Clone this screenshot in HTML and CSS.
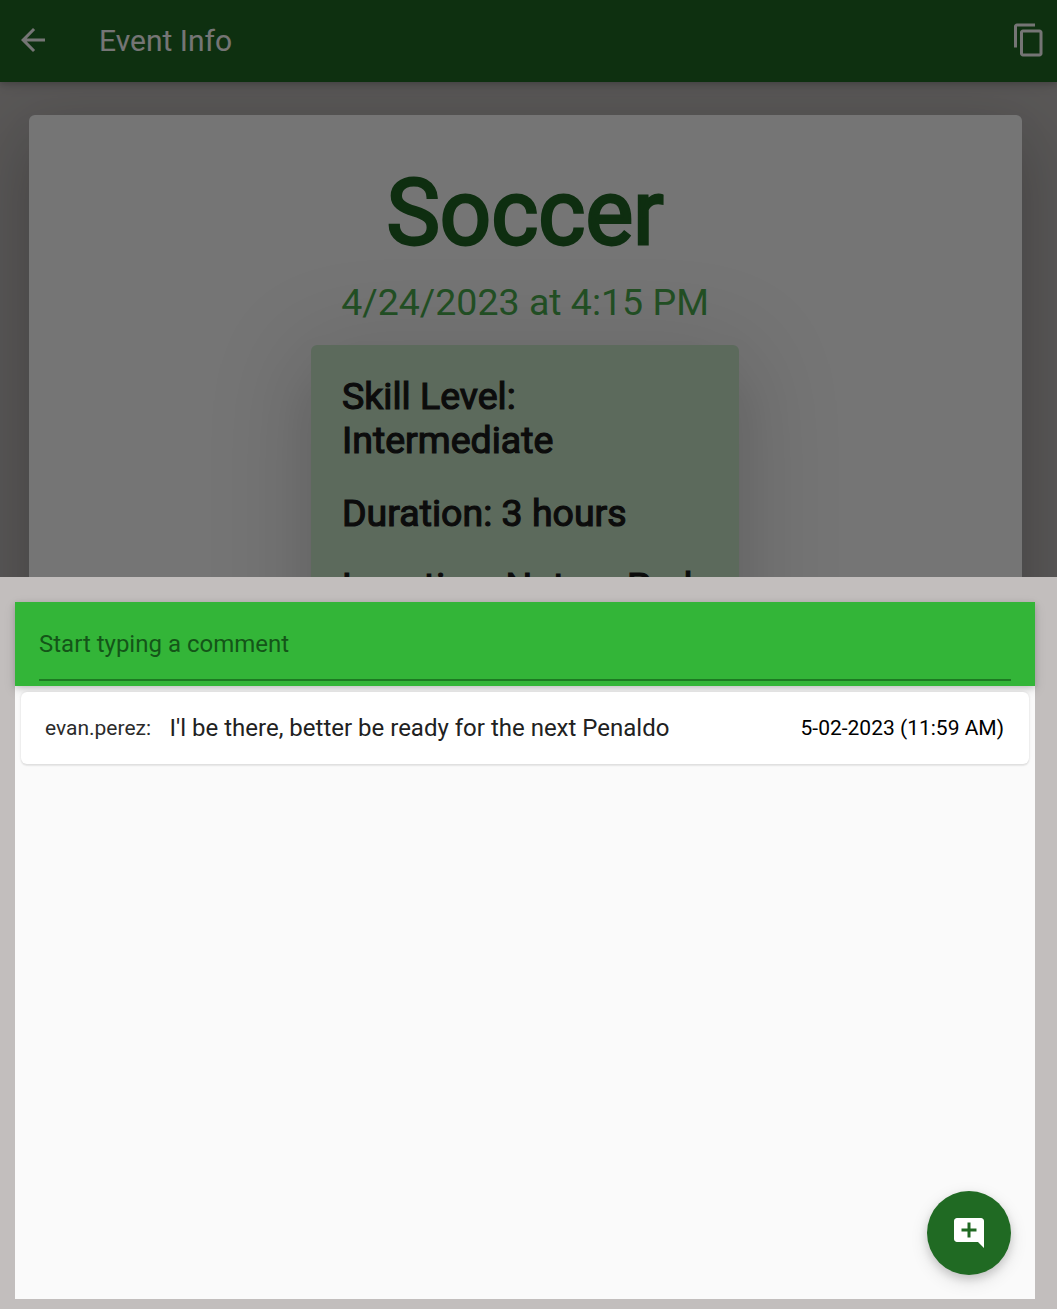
FILE: index.html
```html
<!DOCTYPE html>
<html lang="en">
<head>
<meta charset="utf-8">
<title>Event Info</title>
<link rel="stylesheet" href="styles.css">
</head>
<body>
<div class="screen">
  <header class="app-bar">
    <svg class="icon" viewBox="0 0 24 24"><path d="M20 11H7.83l5.59-5.59L12 4l-8 8 8 8 1.41-1.41L7.83 13H20v-2z"/></svg>
    <h1 class="app-title">Event Info</h1>
    <svg class="icon" viewBox="0 0 24 24"><path d="M16 1H4c-1.1 0-2 .9-2 2v14h2V3h12V1zm3 4H8c-1.1 0-2 .9-2 2v14c0 1.1.9 2 2 2h11c1.1 0 2-.9 2-2V7c0-1.1-.9-2-2-2zm0 16H8V7h11v14z"/></svg>
  </header>
  <main class="event-card">
    <h2 class="event-name">Soccer</h2>
    <p class="event-date">4/24/2023 at 4:15 PM</p>
    <section class="details">
      <p>Skill Level: Intermediate</p>
      <p>Duration: 3 hours</p>
      <p>Location: Nature Park</p>
    </section>
  </main>
  <div class="scrim"></div>
  <div class="sheet">
    <div class="comments">
      <div class="composer"><div class="field">Start typing a comment</div></div>
      <div class="comment">
        <span class="author">evan.perez:</span>
        <span class="text">I'l be there, better be ready for the next Penaldo</span>
        <time class="time">5-02-2023 (11:59 AM)</time>
      </div>
      <button class="fab" aria-label="Add comment"><svg class="icon" viewBox="0 0 24 24"><path d="M22 4c0-1.1-.9-2-2-2H4c-1.1 0-2 .9-2 2v12c0 1.1.9 2 2 2h14l4 4V4zm-5 7h-4v4h-2v-4H7V9h4V5h2v4h4v2z"/></svg></button>
    </div>
  </div>
</div>
</body>
</html>
```
FILE: styles.css
```css
* { box-sizing: border-box; }
body, h1, h2, p { margin: 0; font-weight: 400; }
body { font-family: Roboto, sans-serif; }
.screen {
  position: relative;
  height: 1309px;
  overflow: hidden;
  background: #c2bebd;
}
.icon { width: 36px; height: 36px; fill: #fff; flex: none; }
.app-bar {
  position: relative;
  z-index: 1;
  display: flex;
  align-items: center;
  height: 82px;
  padding: 0 10px 2px 15px;
  background: #206a23;
  box-shadow: 0 2px 6px rgba(0,0,0,.16), 0 4px 12px rgba(0,0,0,.1);
}
.app-title { flex: 1; margin-left: 48px; padding-top: 2px; font-size: 30px; line-height: 36px; color: #fff; }
.event-card {
  display: flex;
  flex-direction: column;
  align-items: center;
  height: 1100px;
  margin: 33px 35.5px 0 28.5px;
  padding-top: 46px;
  border-radius: 6px;
  background: #fff;
  box-shadow: 0 36px 57px 4px rgba(0,0,0,.12), 0 14px 69px 12px rgba(0,0,0,.1);
}
.event-name { font-size: 90px; line-height: 105px; color: #206424; -webkit-text-stroke: 2.8px #206424; }
.event-date { margin-top: 14px; font-size: 37.5px; line-height: 44px; color: #4caf50; }
.details {
  width: 428px;
  height: 700px;
  margin-top: 21px;
  padding: 29px 30px 30px 31px;
  border-radius: 6px;
  background: #c8e6c9;
  font-size: 37.5px;
  line-height: 44px;
  color: #1b1b1b;
  -webkit-text-stroke: 1.2px #1b1b1b;
  box-shadow: 0 36px 57px 4px rgba(0,0,0,.08), 0 14px 110px 24px rgba(0,0,0,.1);
}
.details p + p { margin-top: 29px; }
.scrim { position: absolute; inset: 0; z-index: 2; background: rgba(0,0,0,.54); }
.sheet {
  position: absolute;
  inset: 577px 0 0;
  z-index: 3;
  padding: 25px 22px 10px 15px;
  background: #c2bebd;
}
.comments { position: relative; height: 100%; background: #fafafa; }
.composer {
  height: 83.5px;
  padding: 0 24px;
  background: #33b538;
  box-shadow: 0 2px 6px rgba(0,0,0,.16), 0 4px 12px rgba(0,0,0,.1);
}
.field {
  height: 79px;
  padding-top: 28px;
  border-bottom: 2px solid #1d7a22;
  font-size: 24px;
  line-height: 28px;
  color: #145518;
}
.comment {
  position: relative;
  display: flex;
  align-items: center;
  height: 71.5px;
  margin: 6.5px 6px 6px;
  padding: 0 25px 0 24px;
  border-radius: 6px;
  background: #fff;
  box-shadow: 0 1.5px 1.5px rgba(0,0,0,.07), 0 0 3px rgba(0,0,0,.1);
}
.author, .time { font-size: 21px; }
.author { color: #2b2b2b; }
.text { flex: 1; margin-left: 18.5px; font-size: 24px; color: #212121; }
.time { color: #000; }
.fab {
  position: absolute;
  right: 24px;
  bottom: 24px;
  display: grid;
  place-items: center;
  width: 84px;
  height: 84px;
  padding: 0;
  border: 0;
  border-radius: 50%;
  background: #206a23;
  box-shadow: 0 4px 9px rgba(0,0,0,.14), 0 6px 18px rgba(0,0,0,.12);
}
```
